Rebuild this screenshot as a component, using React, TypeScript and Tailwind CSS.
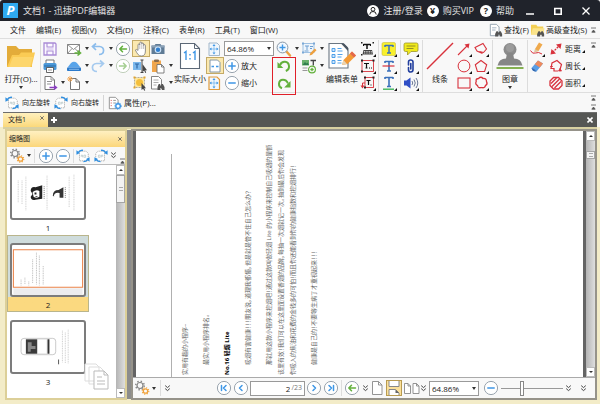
import React, { useState } from "react";

type IconProps = { children: React.ReactNode; className?: string; box?: string };

const Svg: React.FC<IconProps> = ({ children, className = "size-4", box = "0 0 16 16" }) => (
  <svg viewBox={box} className={`shrink-0 ${className}`} fill="none" aria-hidden="true">
    {children}
  </svg>
);

const BLUE = "#3f97e6";
const GREEN = "#62b03c";
const RED = "#d8323c";

// ---------- small shared marks ----------

const Caret = () => (
  <Svg className="h-[3px] w-1.5" box="0 0 6 3">
    <path d="M1 0h4L3 3z" fill="#333" />
  </Svg>
);

const Overflow = () => (
  <Svg className="size-[7px]" box="0 0 7 7">
    <path d="M1.200 .6l2.300 2L5.800 .6M1.200 3.600l2.300 2 2.300-2" stroke="#444" />
  </Svg>
);

const Collapse = () => (
  <Svg className="h-1.5 w-[5px]" box="0 0 5 6">
    <path d="M0 1h5M.8 5.2L2.5 3l1.7 2.2z" stroke="#555" strokeWidth=".8" fill="#555" />
  </Svg>
);

const Corner = () => <path d="M16 13v3h-3z" fill="#111" />;

const Ring: React.FC<{ color: string; ring?: string; d: string; className?: string }> = ({
  color,
  ring = "#8d9aa5",
  d,
  className,
}) => (
  <Svg className={className}>
    <circle cx="8" cy="8" r="6.6" fill="#fff" stroke={ring} strokeWidth=".9" />
    <path d={d} stroke={color} strokeWidth="1.500" strokeLinecap="round" strokeLinejoin="round" />
  </Svg>
);

// ---------- toolbar icons ----------

const icons = {
  save: (
    <Svg>
      <path d="M2 2h11l1 1v11H2z" fill="#fbf8ff" stroke="#a98bd6" strokeWidth="1.300" />
      <path d="M5 2v4h6V2M5 14v-4h6v4" stroke="#a98bd6" strokeWidth="1.100" />
      <path d="M4.500 8h7" stroke="#cdb9ea" />
    </Svg>
  ),
  print: (
    <Svg>
      <path d="M4 5V2h8v3" fill="#fff" stroke="#666" strokeWidth=".9" />
      <rect x="1.500" y="5" width="13" height="7" rx="1.500" fill="#4b98d8" />
      <path d="M2 8h12" stroke="#2a6ca8" />
      <path d="M4.500 9.500h7v5h-7z" fill="#fff" stroke="#555" strokeWidth=".9" />
      <path d="M6 12h4" stroke="#999" />
    </Svg>
  ),
  exportPage: (
    <Svg>
      <path d="M3 1.500h6L12.500 5v9.500H3z" fill="#fff" stroke="#666" strokeWidth=".9" />
      <path d="M9 1.500V5h3.500M5 6.500h5M5 9h4" stroke="#888" strokeWidth=".9" />
      <path d="M7.500 12.500h7M12 10.500l2.500 2-2.500 2" stroke="#8a3fc0" strokeWidth="1.400" />
    </Svg>
  ),
  mail: (
    <Svg>
      <path d="M1.500 3.500h12v9h-12z" fill="#fff" stroke="#777" strokeWidth=".9" />
      <path d="M1.500 3.500l6 5 6-5M1.500 12.500L6 7.500M13.500 12.500L9 7.500" stroke="#777" strokeWidth=".8" />
      <path d="M8.500 12h5M11.500 9.500l3 2.500-3 2.500" stroke={GREEN} strokeWidth="1.600" />
    </Svg>
  ),
  scan: (
    <Svg>
      <path d="M1.500 9.500L5 5Q8 2.500 11 5l3.500 4.500z" fill="#58a4ea" />
      <rect x="1" y="9.500" width="14" height="3.500" rx=".8" fill="#2c7acb" />
      <path d="M3 11.300h10" stroke="#a9d2f7" strokeWidth=".7" />
    </Svg>
  ),
  newPage: (
    <Svg>
      <path d="M4.500 3.500H10L13.500 7v7.500h-9z" fill="#fff" stroke="#666" strokeWidth=".9" />
      <path d="M10 3.500V7h3.500" stroke="#666" strokeWidth=".9" />
      <path d="M4 1v6M1 4h6M2 2l4 4M6 2L2 6" stroke="#efa04a" strokeWidth=".9" />
    </Svg>
  ),
  undo: (
    <Svg>
      <path d="M6 2.500L2.500 5.500 6 9M3 5.500h6.500c5.500 0 5.500 8-.5 8" stroke="#8dbdec" strokeWidth="1.700" />
    </Svg>
  ),
  redo: (
    <Svg>
      <path d="M10 2.500l3.500 3L10 9M13 5.500H6.500c-5.500 0-5.500 8 .5 8" stroke="#a5caef" strokeWidth="1.700" />
    </Svg>
  ),
  hand: (
    <Svg className="mx-px size-4">
      <path
        d="M5 9.500V4q0-1 .9-1t.9.900V2.200Q6.800 1 7.800 1t1 1.200V3q0-1 .9-1t.9 1v1.500q0-.9.900-.9t.9 1V10q0 5-4 5c-3 0-4-2-6-6 .6-1 1.600-.6 2.600.500z"
        fill="#fff"
        stroke="#777"
        strokeWidth=".8"
      />
      <path d="M6.800 4v4M8.800 3v5M10.600 4v4" stroke="#999" strokeWidth=".6" />
    </Svg>
  ),
  textSelect: (
    <Svg>
      <rect x="1" y="4" width="8" height="8" fill="#7cb8ec" />
      <path d="M3 6h4M5 6v4.500" stroke="#2f66a5" strokeWidth="1.200" />
      <path d="M8.500 2h3M8.500 14.500h3M10 2v12.500" stroke="#444" />
      <path d="M10.500 6v8l1.700-1.500 1 2.500 1-.5-1-2.300H15z" fill="#444" />
    </Svg>
  ),
  objectSelect: (
    <Svg>
      <rect x="2.500" y="2.500" width="10" height="10" fill="#ffe79c" stroke="#999" strokeWidth=".8" strokeDasharray="2 1" />
      <circle cx="7.500" cy="7.500" r="3.500" fill="#f5bf3c" />
      <path d="M1.500 1.500h2v2h-2zM11.500 1.500h2v2h-2zM1.500 11.500h2v2h-2z" fill="#e2a32d" />
      <path d="M9.500 8v7l1.700-1.300 1 2 1-.5-1-2H14z" fill="#444" />
    </Svg>
  ),
  camera: (
    <Svg>
      <path d="M1.500 4.500h3l1-1.500h5l1 1.500h3V13h-13z" fill="#5f7b95" />
      <path d="M1.500 4.500h13v2h-13z" fill="#8ca3b8" />
      <circle cx="8" cy="8.800" r="3.300" fill="#cfe5fa" />
      <circle cx="8" cy="8.800" r="2.200" fill="#2f7fd0" />
    </Svg>
  ),
  paste: (
    <Svg>
      <rect x="2" y="2.500" width="9" height="11.500" fill="#f0a64d" />
      <rect x="4" y="1.500" width="5" height="2.500" rx="1" fill="#8a6b4a" />
      <path d="M7 6.500h4.500l2.500 2.500v6H7z" fill="#fff" stroke="#666" strokeWidth=".8" />
      <path d="M11.500 6.500V9H14" stroke="#666" strokeWidth=".8" />
    </Svg>
  ),
  pageFind: (
    <Svg>
      <path d="M1.500 1.500h7l3 3v9.500h-10z" fill="#fff" stroke="#777" strokeWidth=".9" />
      <path d="M3.500 5h5M3.500 7.500h5M3.500 10h3" stroke="#999" strokeWidth=".8" />
      <path d="M7.500 15v-3l1.200-3h1.300l.8 2 .8-2h1.300l1.600 3v3h-2.500v-2h-1.800v2z" fill="#555" />
    </Svg>
  ),
  fitPage: (
    <Svg>
      <path d="M3 2h8l2.500 2.500V14.500H3z" fill="#f1f7fd" stroke="#9bb0c4" strokeWidth=".9" />
      <path d="M8 3l1.500 2h-3zM8 13.500l1.500-2h-3zM3.500 8l2-1.500v3zM12.500 8l-2-1.500v3z" fill={BLUE} />
      <path d="M8 4.500v7.500M4.500 8h7" stroke={BLUE} strokeDasharray="1 1" />
    </Svg>
  ),
  fitWidth: (
    <Svg className="mx-px size-4">
      <path d="M3 2h7.500L13 4.500V14H3z" fill="#fff" stroke="#8496a8" />
      <path d="M4.500 8.500H7M9 8.500h2.500" stroke={BLUE} strokeWidth="1.300" />
    </Svg>
  ),
  fitVisible: (
    <Svg>
      <path d="M3 2h8l2.500 2.500V14.500H3z" fill="#f1f7fd" stroke="#e09b3d" strokeWidth="1.200" />
      <path d="M8 3l1.500 2h-3zM8 13.500l1.500-2h-3zM3.500 8l2-1.500v3zM12.500 8l-2-1.500v3z" fill={BLUE} />
      <path d="M8 4.500v7.500M4.500 8h7" stroke={BLUE} strokeDasharray="1 1" />
    </Svg>
  ),
  zoomTool: (
    <Svg>
      <path d="M10.500 10.500l3.500 4" stroke="#eda03f" strokeWidth="2.400" strokeLinecap="round" />
      <circle cx="6.500" cy="6.500" r="5.400" fill="#f1f8ff" stroke="#8796a5" />
      <path d="M3.500 6.500h6M6.500 3.500v6" stroke={BLUE} strokeWidth="1.400" />
    </Svg>
  ),
  rotateLeft: (
    <Svg>
      <path d="M4 7C6 2.500 12.500 2.800 13 8c.2 2.500-1.200 4.200-3.200 5" stroke={GREEN} strokeWidth="2" />
      <path d="M1.500 4v6h5.800z" fill={GREEN} />
    </Svg>
  ),
  rotateRight: (
    <Svg>
      <path d="M12 8.500C10 3.500 3.500 3.500 3 8.700c-.2 2.300 1 3.800 3 4.500" stroke={GREEN} strokeWidth="2" />
      <path d="M14.500 6v6.500H8.200z" fill={GREEN} />
    </Svg>
  ),
  editText: (
    <Svg>
      <rect x="2" y="2.500" width="11" height="9" fill="#eef5fc" stroke="#8ab4dc" strokeWidth=".8" />
      <path d="M1 1.500h2v2H1zM12 1.500h2v2h-2zM1 10.500h2v2H1z" fill="#7aa8d6" />
      <path d="M4 5h4M6 5v4M9 5.500h3M9 7.500h2M3.500 10h4" stroke="#6c9fd2" />
      <path d="M8.500 14.500l.8-2.500 4.500-4.500 1.700 1.700-4.500 4.500z" fill="#eda03f" />
    </Svg>
  ),
  addContent: (
    <Svg>
      <rect x="1" y="2" width="7" height="5.500" fill="#69b06b" />
      <path d="M1.500 7l2.500-3 1.500 1.500 1-1L8 7z" fill="#2f7d4d" />
      <path d="M9.500 2.500H15M12.300 2.500v5" stroke="#444" strokeWidth="1.300" />
      <path d="M1.500 10h5M1.500 12.500h5" stroke="#999" />
      <circle cx="11" cy="11.500" r="3.400" fill="#fff" stroke={GREEN} strokeWidth="1.200" />
      <path d="M9.300 11.500h3.400M11 9.800v3.400" stroke={GREEN} strokeWidth="1.300" />
    </Svg>
  ),
  typewriter: (
    <Svg>
      <path d="M3.500 3.500h7M7 3.500V8" stroke="#111" strokeWidth="1.500" />
      <path d="M3.500 3v2M10.500 3v2" stroke="#111" />
      <path d="M3.500 9h8.500l1 4.500h-10.500z" fill="#444" />
      <path d="M4 10.500h8M4 12h8" stroke="#eee" strokeWidth=".8" strokeDasharray="1 .7" />
      <path d="M1 1h1.500v1.500H1zM12.500 1H14v1.500h-1.500zM1 13h1.500v1.500H1z" fill="#222" />
      <Corner />
    </Svg>
  ),
  textBox: (
    <Svg>
      <rect x="2" y="2.500" width="11.500" height="11" stroke={RED} strokeWidth=".9" />
      <path d="M4 5.500h5M6.500 5.500v4.500M5.500 10h2" stroke="#111" strokeWidth="1.200" />
      <path d="M9 10h1M11 10h1" stroke="#111" />
      <path d="M1 1.500h2v2H1zM12.500 1.500h2v2h-2zM1 12.500h2v2H1z" fill="#222" />
      <Corner />
    </Svg>
  ),
  callout: (
    <Svg>
      <rect x="5" y="2.500" width="8.500" height="10" stroke={RED} strokeWidth=".9" />
      <path d="M6.500 5.500h4M8.500 5.500V10M10.500 10h1" stroke="#111" strokeWidth="1.200" />
      <path d="M5 8H2.500v3.500" stroke={RED} />
      <path d="M.5 10.500l2 3 2-3z" fill={RED} />
      <path d="M4 1.500h2v2H4zM12.500 1.500h2v2h-2zM4 11.500h2v2H4z" fill="#222" />
      <Corner />
    </Svg>
  ),
  highlight: (
    <Svg>
      <rect x="1" y="1.500" width="13.500" height="13" rx="1.500" fill="#f8f02c" stroke="#c9be3a" strokeWidth=".6" />
      <path d="M4 4.500h8M8 4v8M6 12h4M4 4v2M12 4v2" stroke="#3a70bb" strokeWidth="1.500" />
      <Corner />
    </Svg>
  ),
  strike: (
    <Svg>
      <path d="M4 3.500h8M8 3v10M6 13h4M4 3v2M12 3v2" stroke="#3a70bb" strokeWidth="1.600" />
      <path d="M1.500 8h12" stroke={RED} strokeWidth="1.200" />
      <Corner />
    </Svg>
  ),
  underline: (
    <Svg>
      <path d="M4 2.500h8M8 2v9M6 11.500h4M4 2v2M12 2v2" stroke="#3a70bb" strokeWidth="1.600" />
      <path d="M2 14.200h11" stroke="#3fb558" strokeWidth="1.400" />
      <Corner />
    </Svg>
  ),
  note: (
    <Svg>
      <path d="M2.500 2h11Q15 2 15 3.500V9q0 1.500-1.500 1.500H8L4.500 14v-3.500h-2Q1 10.500 1 9V3.500Q1 2 2.500 2z" fill="#f1ea1c" stroke="#9a942a" strokeWidth=".8" />
      <path d="M3.500 5h9M3.500 7.500h7" stroke="#7d7825" strokeWidth=".8" />
      <Corner />
    </Svg>
  ),
  attach: (
    <Svg>
      <path d="M5.500 7V4q0-2 2.200-2T10 4v7.500q0 2.500-2.300 2.500t-2.200-2.500v-2M7.800 5.500V11" stroke="#223f9e" strokeWidth="1.600" strokeLinecap="round" />
      <Corner />
    </Svg>
  ),
  sound: (
    <Svg>
      <path d="M1 5.500h2.500L7.500 2.500v11l-4-3H1z" fill="#2f4fc6" />
      <path d="M9 6q1.500 2 0 4M11 4.500q2.500 3.500 0 7M13 3q3.500 5 0 10" stroke="#5b6b8c" strokeWidth=".9" />
      <Corner />
    </Svg>
  ),
  arrow: (
    <Svg>
      <path d="M2 14L12 4" stroke={RED} strokeWidth="1.100" />
      <path d="M13.500 2.500l-1 5-4-4z" fill={RED} />
      <Corner />
    </Svg>
  ),
  circle: (
    <Svg>
      <circle cx="8" cy="8" r="5.900" stroke={RED} />
      <Corner />
    </Svg>
  ),
  rect: (
    <Svg>
      <rect x="2" y="3" width="12" height="10" stroke={RED} strokeWidth="1.100" />
      <Corner />
    </Svg>
  ),
  polyline: (
    <Svg>
      <path d="M9.500 12.500L4 10 2 6.500l8-4 3.500 5.500-3 3.500-4-1" stroke={RED} strokeWidth="1.100" />
      <Corner />
    </Svg>
  ),
  pentagon: (
    <Svg>
      <path d="M8 2.500l5.700 4.200L11.600 13.500H4.400L2.300 6.700z" stroke={RED} strokeWidth="1.100" />
      <Corner />
    </Svg>
  ),
  cloud: (
    <Svg>
      <path d="M5.500 3.500q2.500-2.500 4.500 0 3.500-.5 3.500 3 1.500 2.500-1 4-.8 3-4 2-3.500 1-4-2-2.700-1.500-1.300-4Q2.500 3.500 5.500 3.500z" stroke={RED} strokeWidth="1.300" />
      <Corner />
    </Svg>
  ),
  pencil: (
    <Svg>
      <path d="M6 8l4-6.500L13.500 3.500 9.500 10 5.500 11z" fill="#efa94c" />
      <path d="M6 8l3.500 2-4 1z" fill="#d9c9a8" />
      <path d="M1.500 9.500q2 4 5 2.500t6.500 1" stroke={RED} />
      <Corner />
    </Svg>
  ),
  eraser: (
    <Svg>
      <path d="M2.500 10L9 2.500 14 5.500l-6.500 8q-3.800.5-5-3.500z" fill="#5a9de4" />
      <path d="M5.800 6.200L9 2.500 14 5.500l-3.200 4z" fill="#ee8a5c" />
      <path d="M2.500 10q2.500 0 5 3.500-3.800.5-5-3.500z" fill="#3568ad" />
    </Svg>
  ),
  distance: (
    <Svg>
      <path d="M4.500 11.500l7-7" stroke={RED} strokeWidth="1.400" strokeDasharray="2 1" />
      <path d="M13.500 2.500l-1 5.500L8 3.500zM2.500 13.500l1-5.500L8 12.500z" fill={RED} />
    </Svg>
  ),
  perimeter: (
    <Svg>
      <path d="M10 13H6v-2.500H3L4 5l5-2.500 4.500 4-1.500 5" stroke={RED} strokeWidth="1.200" />
      <path d="M2 8.500h3M12 10.500l1.500 2.500h-3z" stroke={RED} fill={RED} strokeWidth=".8" />
    </Svg>
  ),
  area: (
    <Svg>
      <path d="M5.500 2.500h5l3.500 3.500v4.500L10.500 14h-5L2 10.500V6z" stroke={RED} strokeWidth="1.300" />
      <path d="M3 8.500L8.500 3M4 11.500L11.500 4M6.500 13L13 6.500" stroke={RED} strokeWidth="1.200" />
    </Svg>
  ),
};

const PageTurn: React.FC<{ flip?: boolean; className?: string }> = ({ flip, className }) => (
  <Svg className={`${className ?? "size-3.5"} ${flip ? "-scale-x-100" : ""}`}>
    <path d="M4 2.500h7.500L14 5v8.500H4z" fill="#fff" stroke="#999" strokeWidth=".8" strokeDasharray="1.500 .8" />
    <path d="M6 9V7h1.500v2.500M9 7h2v2.500H9z" stroke="#abb" strokeWidth=".7" />
    <path d="M2.500 4Q4.500 1 8 1.500M13.500 12q-2 2.500-5 2.500" stroke="#2f8fe0" strokeWidth="1.500" />
    <path d="M.5 6.500V1.500L4.500 4.500zM15.500 9.500v5L11.500 11.500z" fill="#2f8fe0" />
  </Svg>
);

const Gears = () => (
  <Svg>
    <circle cx="6" cy="5.500" r="3" stroke="#858585" strokeWidth="1.200" />
    <circle cx="6" cy="5.500" r="4.300" stroke="#858585" strokeWidth="1.400" strokeDasharray="1.400 2" />
    <circle cx="11.500" cy="11" r="2.200" stroke="#f0a23c" strokeWidth="1.300" />
    <circle cx="11.500" cy="11" r="3.300" stroke="#f0a23c" strokeWidth="1.100" strokeDasharray="1.200 1.400" />
  </Svg>
);

// ---------- toolbar building blocks ----------

type ToolProps = { icon: React.ReactNode; label: string; menu?: boolean; active?: boolean };

const Tool: React.FC<ToolProps> = ({ icon, label, menu, active }) => (
  <button
    aria-label={label}
    className={`flex h-[17px] items-center justify-start gap-0.5 ${
      active ? "bg-[#fbe9b0] ring-1 ring-inset ring-[#c4aa66]" : ""
    }`}
  >
    {icon}
    {menu && <Caret />}
  </button>
);

const Col: React.FC<{ className?: string; children: React.ReactNode }> = ({ className = "", children }) => (
  <div className={`flex shrink-0 flex-col items-start text-[8px] ${className}`}>{children}</div>
);

const BigTool: React.FC<{ label: string; icon: React.ReactNode; className: string; menu?: boolean }> = ({
  label,
  icon,
  className,
  menu,
}) => (
  <button className={`flex shrink-0 flex-col items-center pt-0.5 text-[8px] ${className}`}>
    {icon}
    <span className="mt-1 whitespace-nowrap leading-[10px]">{label}</span>
    {menu && (
      <span className="mt-0.5">
        <Caret />
      </span>
    )}
  </button>
);

const Divider = () => <div className="mx-px w-px shrink-0 self-stretch bg-[#dcdcdc]" />;

const ZoomSelect: React.FC<{ className: string }> = ({ className }) => (
  <div className={`relative shrink-0 ${className}`}>
    <select
      aria-label="缩放"
      defaultValue="64.86%"
      className="h-[15px] w-full appearance-none border border-[#9a9a9a] bg-white pl-0.5 text-[8px] leading-[13px]"
    >
      <option>64.86%</option>
      <option>100%</option>
    </select>
    <span className="pointer-events-none absolute inset-y-0 right-0.5 flex items-center">
      <Caret />
    </span>
  </div>
);

// ---------- page sections ----------

const TitleBar = () => (
  <header className="flex h-[21px] items-center rounded-t-[3px] bg-[#20232b] pl-[3px] pr-2.5 text-[9px] text-[#e4e4e4]">
    <span className="flex size-[15px] items-center justify-center bg-[#2faaf0] text-[13px] font-bold italic leading-none text-white">
      P
    </span>
    <h1 className="ml-[5px]">文档1 - 迅捷PDF编辑器</h1>
    <div className="ml-auto flex items-center">
      <button className="flex items-center gap-1">
        <Svg className="size-3" box="0 0 12 12">
          <circle cx="6" cy="6" r="6" fill="#fff" />
          <circle cx="6" cy="4.300" r="1.900" stroke="#222" />
          <path d="M2.800 9.500q0-3 3.200-3t3.200 3" stroke="#222" />
        </Svg>
        注册/登录
      </button>
      <button className="ml-1 flex items-center gap-1">
        <span className="flex size-3 items-center justify-center rounded-full bg-white font-bold leading-none text-[#222]">¥</span>
        购买VIP
      </button>
      <button className="ml-1.5 flex items-center gap-1">
        <span className="flex size-3 items-center justify-center rounded-full bg-white font-bold leading-none text-[#222]">?</span>
        帮助
      </button>
      <button aria-label="最小化" className="ml-3">
        <Svg className="size-2" box="0 0 8 8">
          <path d="M0 7h8" stroke="#fff" strokeWidth="1.500" />
        </Svg>
      </button>
      <button aria-label="最大化" className="ml-5">
        <Svg className="size-2" box="0 0 8 8">
          <path d="M.8 1.500h6.400v5.700H.800z" stroke="#fff" strokeWidth="1.600" />
        </Svg>
      </button>
      <button aria-label="关闭" className="ml-5">
        <Svg className="size-2" box="0 0 8 8">
          <path d="M.5.500l7 7M7.500.500l-7 7" stroke="#fff" strokeWidth="1.300" />
        </Svg>
      </button>
    </div>
  </header>
);

const MENUS = ["文件", "编辑(E)", "视图(V)", "文档(D)", "注释(C)", "表单(R)", "工具(T)", "窗口(W)"];

const MenuBar = () => (
  <nav className="flex h-[18px] items-center border-b border-[#dedede] pl-2.5 pr-1 text-[8px]">
    <div className="flex gap-2.5">
      {MENUS.map((name) => (
        <button key={name}>{name}</button>
      ))}
    </div>
    <button className="ml-auto flex items-center gap-px">
      <Svg className="size-3.5">
        <path d="M1.500 1.500h7l3 3v10h-10z" fill="#fff" stroke="#8a9aa8" />
        <path d="M3.500 5.500h5M3.500 8h4" stroke="#9ab" />
        <path d="M7 15.500v-3l1.500-3H10l1 1.500 1-1.500h1.500l1.500 3v3h-2.800v-2h-1.700v2z" fill="#555" />
      </Svg>
      查找(F)
    </button>
    <button className="ml-0.5 mr-1 flex items-center gap-px">
      <Svg className="size-3.5">
        <path d="M0 2h6l1.500 2H14v9H0z" fill="#f3cf54" />
        <path d="M0 13l2-7h13.500l-1.500 7z" fill="#fbe48b" />
        <path d="M7 15.500v-3l1.500-3H10l1 1.500 1-1.500h1.500l1.500 3v3h-2.800v-2h-1.700v2z" fill="#555" />
      </Svg>
      高级查找(S)
    </button>
    <Collapse />
  </nav>
);

const Ribbon = () => (
  <section className="flex h-[54px] items-start border-b border-[#dedede] pl-[3px] pr-1 pt-px">
    <BigTool
      className="w-9"
      label="打开(O)..."
      menu
      icon={
        <Svg className="h-7 w-[30px]" box="0 0 30 28">
          <path d="M1 4h9l3 3h13v18H1z" fill="#e3ac3a" />
          <path d="M1 25l5-12h7l2-2.500h14L25.500 25z" fill="#fbcb54" />
          <path d="M3 25l4-10h20l-3 10z" fill="#fdd66c" />
        </Svg>
      }
    />
    <Divider />
    <Col className="w-6">
      <Tool icon={icons.save} label="保存" />
      <Tool icon={icons.print} label="打印" />
      <Tool icon={icons.exportPage} label="导出" menu />
    </Col>
    <Col className="w-6">
      <Tool icon={icons.mail} label="邮件" menu />
      <Tool icon={icons.scan} label="扫描" menu />
      <Tool icon={icons.newPage} label="新建" menu />
    </Col>
    <Col className="w-[25px]">
      <Tool icon={icons.undo} label="撤销" menu />
      <Tool icon={icons.redo} label="重做" menu />
    </Col>
    <Col className="w-[17px]">
      <Tool icon={<Ring color={GREEN} d="M11.500 8H4.800M7.500 5.300L4.800 8l2.700 2.700" />} label="后退" />
      <Tool icon={<Ring color="#a5cf92" ring="#b9c9b3" d="M4.500 8h6.700M8.500 5.300L11.200 8l-2.700 2.700" />} label="前进" />
    </Col>
    <Col className="w-[18px]">
      <Tool icon={icons.hand} label="手形工具" active />
      <Tool icon={icons.textSelect} label="选择文本" />
      <Tool icon={icons.objectSelect} label="选择对象" />
    </Col>
    <Col className="w-6">
      <Tool icon={icons.camera} label="快照" />
      <Tool icon={icons.paste} label="粘贴" menu />
      <Tool icon={icons.pageFind} label="查找页面" menu />
    </Col>
    <BigTool
      className="w-8"
      label="实际大小"
      icon={
        <Svg className="h-7 w-[22px]" box="0 0 22 28">
          <path d="M1.500 1.500h14l5 5v20h-19z" fill="#fff" stroke="#5c6876" strokeWidth="1.100" />
          <path d="M15.500 1.500v5h5" stroke="#5c6876" />
          <path d="M5 11l2-1.500V18M14 11l2-1.500V18" stroke={BLUE} strokeWidth="1.400" />
          <path d="M11 12v1.500M11 16v1.500" stroke={BLUE} strokeWidth="1.400" />
        </Svg>
      }
    />
    <Col className="w-[18px]">
      <Tool icon={icons.fitPage} label="适合页面" />
      <Tool icon={icons.fitWidth} label="适合宽度" active />
      <Tool icon={icons.fitVisible} label="适合可见" />
    </Col>
    <Col className="w-[52px]">
      <div className="flex h-[17px] items-center">
        <ZoomSelect className="w-[50px]" />
      </div>
      <button className="flex h-[17px] items-center gap-px">
        <Ring color={BLUE} d="M4.800 8h6.400M8 4.800v6.400" />
        放大
      </button>
      <button className="flex h-[17px] items-center gap-px">
        <Ring color={BLUE} d="M4.800 8h6.400" />
        缩小
      </button>
    </Col>
    <Col className="w-[25px]">
      <Tool icon={icons.zoomTool} label="缩放工具" menu />
      <div className="relative">
        <Tool icon={icons.rotateLeft} label="逆时针旋转" />
        <Tool icon={icons.rotateRight} label="顺时针旋转" />
        <span className="pointer-events-none absolute -inset-x-1 -bottom-1 top-0 border border-[#e0202a]" />
      </div>
    </Col>
    <Col className="w-[25px]">
      <Tool icon={icons.editText} label="编辑内容" menu />
      <Tool icon={icons.addContent} label="添加内容" menu />
    </Col>
    <BigTool
      className="w-8"
      label="编辑表单"
      icon={
        <Svg className="h-7 w-[30px]" box="0 0 30 28">
          <path d="M2 1.500h14l5 5V26H2z" fill="#fff" stroke="#6a7682" strokeWidth="1.100" />
          <path d="M14 1.500l7 7.500V5.500l-4-4z" fill="#4a5560" />
          <path d="M5 6.500h3v3H5zM5 12.500h3v3H5zM5 18.500h3v3H5z" fill="#cfe6fb" stroke={BLUE} strokeWidth=".9" />
          <path d="M10.500 6.500h4M10.500 9h5M10.500 12.500h5M10.500 15h4M10.500 18.500h4M10.500 21h4" stroke={BLUE} strokeWidth=".9" />
          <path d="M15 23l1.500-5L25 9.500l4 4-8.500 8.500z" fill="#f39a36" />
          <path d="M25 9.500l4 4-2 2-4-4z" fill="#e3674c" />
          <path d="M15 23l1.500-5 3.500 4z" fill="#e8d4b4" />
        </Svg>
      }
    />
    <Col className="w-[19px] pl-0.5">
      <Tool icon={icons.typewriter} label="打字机" />
      <Tool icon={icons.textBox} label="文本框" />
      <Tool icon={icons.callout} label="标注" />
    </Col>
    <Divider />
    <Col className="w-[19px] pl-px">
      <Tool icon={icons.highlight} label="高亮" />
      <Tool icon={icons.strike} label="删除线" />
      <Tool icon={icons.underline} label="下划线" />
    </Col>
    <Divider />
    <Col className="w-[19px] pl-px">
      <Tool icon={icons.note} label="便签" />
      <Tool icon={icons.attach} label="附件" />
      <Tool icon={icons.sound} label="声音" />
    </Col>
    <Divider />
    <BigTool
      className="w-8"
      label="线条"
      icon={
        <Svg className="size-7" box="0 0 28 28">
          <path d="M1 27L27 1" stroke={RED} strokeWidth="1.500" />
        </Svg>
      }
    />
    <Col className="w-[17px]">
      <Tool icon={icons.arrow} label="箭头" />
      <Tool icon={icons.circle} label="圆形" />
      <Tool icon={icons.rect} label="矩形" />
    </Col>
    <Col className="w-[18px]">
      <Tool icon={icons.polyline} label="折线" />
      <Tool icon={icons.pentagon} label="多边形" />
      <Tool icon={icons.cloud} label="云形" />
    </Col>
    <Divider />
    <BigTool
      className="w-8"
      label="图章"
      menu
      icon={
        <Svg className="size-7" box="0 0 28 28">
          <circle cx="14" cy="7.500" r="6.500" fill="#8c8c8c" />
          <path d="M11 11h6l1 5.500q7 0 8.500 7h-25q1.500-7 8.500-7z" fill="#868686" />
          <circle cx="14" cy="6" r="4" fill="#9c9c9c" />
          <path d="M.5 26h27" stroke="#79a93f" strokeWidth="1.800" />
        </Svg>
      }
    />
    <Divider />
    <Col className="w-[19px]">
      <Tool icon={icons.pencil} label="铅笔" />
      <Tool icon={icons.eraser} label="橡皮擦" />
    </Col>
    <Col>
      {[
        { name: "距离", icon: icons.distance },
        { name: "周长", icon: icons.perimeter },
        { name: "面积", icon: icons.area },
      ].map((m) => (
        <button key={m.name} className="flex h-[17px] items-center gap-px">
          {m.icon}
          {m.name}
          <Svg className="mb-1 size-[3px] self-end" box="0 0 4 4">
            <path d="M4 0v4H0z" fill="#111" />
          </Svg>
        </button>
      ))}
    </Col>
    <div className="ml-auto pt-0.5">
      <Collapse />
    </div>
  </section>
);

const RotateBar = () => (
  <section className="flex h-[19px] items-center pl-[5px] pr-1">
    <button className="flex items-center gap-[3px]">
      <PageTurn />
      向左旋转
    </button>
    <button className="ml-1 flex items-center gap-[3px]">
      <PageTurn flip />
      向右旋转
    </button>
    <div className="mx-1 h-4 w-px bg-[#d5d5d5]" />
    <button className="flex items-center gap-0.5 text-[8px]">
      <Svg className="size-3.5">
        <path d="M1.500 1.500h7l3 3v10h-10z" fill="#fff" stroke="#888" />
        <path d="M3 5h1.500M3 8h1.500M3 11h1.500" stroke="#d66" />
        <path d="M6 5h3M6 8h3" stroke="#888" />
        <circle cx="11.500" cy="11.500" r="2.600" fill="#fff" stroke={BLUE} strokeWidth="1.600" />
        <circle cx="11.500" cy="11.500" r="3.800" stroke={BLUE} strokeDasharray="1.300 1.500" />
      </Svg>
      属性(P)...
    </button>
    <div className="ml-auto flex h-full flex-col justify-between py-0.5">
      <Collapse />
      <Collapse />
    </div>
  </section>
);

const TabBar = () => (
  <div className="mx-[3px] flex h-[15px] items-center border-t border-[#6d6d6d] bg-[#555654]">
    <button className="flex h-full w-[45px] items-center bg-gradient-to-b from-[#fff0bd] to-[#fbd97a] pl-[5px]">
      文档1
    </button>
    <button aria-label="关闭标签" className="-ml-2 self-start pt-[3px]">
      <Svg className="size-1" box="0 0 4 4">
        <path d="M.3.300l3.400 3.400M3.700.300L.3 3.700" stroke="#555" strokeWidth=".8" />
      </Svg>
    </button>
    <button aria-label="新建标签" className="ml-[7px]">
      <Svg className="size-1.5" box="0 0 6 6">
        <path d="M3 0v6M0 3h6" stroke="#fff" strokeWidth="2" />
      </Svg>
    </button>
    <button aria-label="关闭文档" className="ml-auto mr-1">
      <Svg className="size-1.5" box="0 0 6 6">
        <path d="M.5.500l5 5M5.500.500l-5 5" stroke="#fff" strokeWidth="1.600" />
      </Svg>
    </button>
  </div>
);

// Miniatures drawn inside the page thumbnails
const thumbs = [
  <>
    <path d="M6 13v23M10 13v25M14 9v35M36 8v36M59 9v32M64 7v37" stroke="#ccc" strokeDasharray="1 .8" />
    <path d="M19 24q0-5 5-4l7-2v14l-7 1q-5 1-5-3l2-3z" fill="#222" />
    <path d="M21 25q4-3 7-1v6q-3 2-6 0z" fill="#fff" />
    <path d="M23 25.500h2v2h-2zM24 29h2v1h-2z" fill="#222" />
    <path d="M33 19v14M55 20v12" stroke="#777" strokeDasharray="1 1" />
    <path d="M42 29q0-6 6-6l5-3v11h-3z" fill="#333" />
    <path d="M43 29q1-4 6-3v5q-4 2-6-2z" fill="#fff" />
  </>,
  <>
    <path d="M9 36v6M13 34v7M17 38v4M21 15v25M25 8v33M28 11v31M32 22v19" stroke="#bbb" strokeDasharray="1 .8" />
    <path d="M1 5h72v39H1z" stroke="#ea8248" strokeWidth="1.100" />
    <path d="M1 45h72v7H1z" fill="#ececee" />
  </>,
  <>
    <rect x="9" y="17" width="36" height="17" rx="3" stroke="#bbb" strokeWidth=".8" />
    <rect x="14" y="18" width="12" height="15" fill="#3a3a3a" />
    <path d="M16 21h4v4h4v3h-5v3h-3z" fill="#888" />
    <path d="M26 18h10v15H26z" fill="#fff" stroke="#ccc" strokeWidth=".5" />
    <path d="M37.500 18v15" stroke="#333" strokeWidth="2" />
    <path d="M48 39v5" stroke="#555" />
    <path d="M52 9v33M55 11v32M58 8v35" stroke="#ccc" strokeDasharray="1 .8" />
  </>,
];

const VScroll: React.FC<{ thumb: string }> = ({ thumb }) => (
  <div className="flex w-[9px] shrink-0 flex-col bg-gradient-to-r from-[#b4b4b4] to-[#dedede]">
    <button aria-label="向上滚动" className="flex h-2.5 items-center justify-center border border-[#bbb] bg-white">
      <Svg className="h-0.5 w-1" box="0 0 4 2">
        <path d="M0 2h4L2 0z" fill="#333" />
      </Svg>
    </button>
    <div className={`${thumb} flex items-center justify-center border border-[#a5a5a5] bg-[#f3f3f3]`}>
      <div className="size-1 border-y border-[#aaa]" />
    </div>
    <button aria-label="向下滚动" className="mt-auto flex h-2.5 items-center justify-center border border-[#bbb] bg-white">
      <Svg className="h-0.5 w-1" box="0 0 4 2">
        <path d="M0 0h4L2 2z" fill="#333" />
      </Svg>
    </button>
  </div>
);

const Thumbnails = () => {
  const [current, setCurrent] = useState(2);

  return (
    <aside className="relative flex w-[122px] shrink-0 flex-col border-2 border-[#dccf98] bg-white">
      <div className="flex h-4 shrink-0 items-center justify-between bg-gradient-to-b from-[#fff0c0] to-[#fbd67a] px-0.5">
        <h2>缩略图</h2>
        <button aria-label="关闭面板" className="mr-px">
          <Svg className="size-1" box="0 0 4 4">
            <path d="M.3.300l3.400 3.400M3.700.300L.3 3.700" stroke="#555" strokeWidth=".8" />
          </Svg>
        </button>
      </div>
      <div className="flex h-[18px] shrink-0 items-center border-b border-[#bbb] bg-[#f8f8f8] pl-0.5">
        <button aria-label="选项" className="flex items-center gap-px">
          <Gears />
          <Caret />
        </button>
        <div className="ml-0.5 mr-[3px] h-3.5 w-px bg-[#ddd]" />
        <button aria-label="放大缩略图">
          <Ring color={BLUE} d="M4.800 8h6.400M8 4.800v6.400" />
        </button>
        <button aria-label="缩小缩略图" className="ml-px">
          <Ring color={BLUE} d="M4.800 8h6.400" />
        </button>
        <div className="mx-0.5 h-3.5 w-px bg-[#ddd]" />
        <button aria-label="向左旋转页面">
          <PageTurn />
        </button>
        <button aria-label="向右旋转页面" className="ml-1">
          <PageTurn flip />
        </button>
        <button aria-label="更多" className="ml-0.5">
          <Overflow />
        </button>
        <div className="ml-auto self-end">
          <Collapse />
        </div>
      </div>
      <div className="flex min-h-0 flex-1">
        <ul className="flex-1">
          {thumbs.map((art, i) => {
            const page = i + 1;
            return (
              <li key={page}>
                <button
                  onClick={() => setCurrent(page)}
                  className={`flex w-[82px] flex-col items-center ${i === 0 ? "pt-px" : "pt-2"} ${
                    page === current
                      ? "bg-gradient-to-b from-[#cfdcdc] from-80% to-[#fbd980] to-80% ring-1 ring-inset ring-[#b9b58c]"
                      : ""
                  }`}
                >
                  <Svg
                    className="h-[54px] w-[76px] rounded-[3px] border-2 border-[#7c7c7c] bg-white"
                    box="0 0 74 52"
                  >
                    {art}
                  </Svg>
                  <span className="h-[15px] text-[8px] leading-[15px]">{page}</span>
                </button>
              </li>
            );
          })}
        </ul>
        <VScroll thumb="h-7" />
      </div>
      <Svg className="pointer-events-none absolute bottom-2 right-4 h-[27px] w-[25px]" box="0 0 25 27">
        <path d="M1 1h11l3 3v14H1zM5 4h11l3 3v14H5z" fill="#fff" stroke="#ddd" />
        <path d="M10 8h10l4 4v14H10z" fill="#fff" stroke="#bbb" />
        <path d="M20 8v4h4M13 14h5M13 18h8M13 21h8" stroke="#bbb" />
      </Svg>
    </aside>
  );
};

// The open page is turned a quarter to the left, so lines read bottom to top
const Page = () => (
  <div className="flex min-h-0 flex-1 border-x-[3px] border-[#646464] bg-white">
    <div className="ml-[35px] mt-[23px] w-px bg-[#b0b0b0]" />
    <article className="ml-[7px] flex rotate-180 flex-col gap-[9px] whitespace-nowrap pt-0.5 text-[6px] leading-[12px] text-[#666] [font-feature-settings:'palt'] [text-orientation:sideways] [writing-mode:vertical-rl]">
      <p>实用有趣的小程序~</p>
      <p className="indent-2.5">最实用小程序排名。</p>
      <h3 className="font-bold text-black">No.16 轻烟 Lite</h3>
      <p className="indent-2.5">吸烟有害健康！！！朋友说，道理我都懂，但是就是管不住自己怎么办？</p>
      <p className="indent-2.5">
        那就用这款小程序来控烟吧！通过这款叫做轻烟 Lite 的小程序来控制自己吸烟的量额
        <br />
        该里有效！我们可以在这里面设置香烟的品牌，每抽一次烟就记一次。抽到最后你会发现
        <br />
        你吸入的焦油和花费的金钱多的可怕！而且你还能看到你的健康指数和控烟排行！
      </p>
      <p className="indent-2.5">健康是自己的！不要等生病了才重视起来！！！</p>
    </article>
  </div>
);

const StatusBar = () => (
  <footer className="flex h-[21px] shrink-0 items-center border-t border-[#aaa] bg-[#f8f8f8] pl-px pr-2">
    <button aria-label="选项" className="flex items-center gap-px">
      <Gears />
      <Caret />
    </button>
    <div className="mx-[3px] h-4 w-px bg-[#ddd]" />
    <button aria-label="更多">
      <Overflow />
    </button>
    <div className="ml-auto flex items-center gap-px">
      <button aria-label="第一页">
        <Ring color={BLUE} d="M5.500 5.500v5M10 5.500L7.500 8l2.500 2.500" />
      </button>
      <button aria-label="上一页">
        <Ring color={BLUE} d="M9 5.500L6.500 8 9 10.500" />
      </button>
      <div className="flex h-[15px] w-[55px] items-center border border-[#999] bg-white pr-0.5">
        <input
          aria-label="页码"
          defaultValue="2"
          className="h-[13px] w-0 flex-1 text-right text-[8px] leading-[13px] outline-none"
        />
        <span className="ml-px text-[7px] text-[#777]">/23</span>
      </div>
      <button aria-label="下一页">
        <Ring color={BLUE} d="M7 5.500L9.500 8 7 10.500" />
      </button>
      <button aria-label="最后一页">
        <Ring color={BLUE} d="M6 5.500L8.500 8 6 10.500M10.500 5.500v5" />
      </button>
    </div>
    <div className="mx-0.5 h-4 w-px bg-[#ddd]" />
    <button aria-label="返回视图">
      <Ring color={GREEN} d="M11.500 8H4.800M7.500 5.300L4.800 8l2.700 2.700" />
    </button>
    <button aria-label="更多视图" className="ml-0.5">
      <Overflow />
    </button>
    <button aria-label="单页">
      <Svg>
        <path d="M3.500 1.500h6L13 5v9.500H3.500z" fill="#fff" stroke="#888" strokeWidth=".9" />
        <path d="M9.500 1.500V5H13" stroke="#888" strokeWidth=".9" />
      </Svg>
    </button>
    <button aria-label="连续" className="ml-px bg-[#fbe09a] ring-1 ring-inset ring-[#b89b50]">
      <Svg>
        <path d="M3 1v5.500h10V1M3 15V9.500h6.500L13 13v2" fill="#fff" stroke="#888" />
        <path d="M9.500 9.500V13H13z" fill="#666" />
      </Svg>
    </button>
    <button aria-label="双页" className="ml-0.5">
      <Svg>
        <path d="M.5 3.500H4L6.500 6v7.500h-6zM9 3.500h3.500L15 6v7.500H9z" fill="#fff" stroke="#888" strokeWidth=".9" />
        <path d="M4 3.500V6h2.500M12.500 3.500V6H15" stroke="#888" strokeWidth=".9" />
      </Svg>
    </button>
    <button aria-label="更多布局" className="mr-0.5">
      <Overflow />
    </button>
    <ZoomSelect className="w-[50px]" />
    <button aria-label="缩小视图" className="ml-1">
      <Ring color={BLUE} d="M4.800 8h6.400" />
    </button>
    <input
      type="range"
      aria-label="缩放比例"
      defaultValue={33}
      className="ml-0.5 h-4 w-[62px] appearance-none bg-transparent [&::-webkit-slider-runnable-track]:h-px [&::-webkit-slider-runnable-track]:bg-[#999] [&::-webkit-slider-thumb]:-mt-[7px] [&::-webkit-slider-thumb]:h-[15px] [&::-webkit-slider-thumb]:w-1 [&::-webkit-slider-thumb]:appearance-none [&::-webkit-slider-thumb]:border [&::-webkit-slider-thumb]:border-[#888] [&::-webkit-slider-thumb]:bg-white"
    />
    <button aria-label="更多缩放" className="ml-0.5">
      <Overflow />
    </button>
    <button aria-label="更多选项" className="ml-2">
      <Overflow />
    </button>
  </footer>
);

export default function App() {
  return (
    <div className="flex h-screen flex-col overflow-hidden bg-[#f8f8f8] font-['Open_Sans','Noto_Sans_CJK_SC',sans-serif] text-[7px] leading-[10px] text-[#222]">
      <TitleBar />
      <MenuBar />
      <Ribbon />
      <RotateBar />
      <TabBar />
      <div className="flex min-h-0 flex-1 flex-col border-x-[3px] border-[#f3ecc8] bg-[#f3ecc8] pb-1">
        <main className="flex min-h-0 flex-1 border-t-2 border-[#d8d0a2] pl-0.5">
          <Thumbnails />
          <div className="my-px w-1 shrink-0 bg-[#8c8c8c]" />
          <section className="flex min-w-0 flex-1 flex-col border-2 border-[#96938a]">
            <div className="flex min-h-0 flex-1">
              <Page />
              <VScroll thumb="mt-2.5 h-2" />
            </div>
            <StatusBar />
          </section>
        </main>
      </div>
    </div>
  );
}
